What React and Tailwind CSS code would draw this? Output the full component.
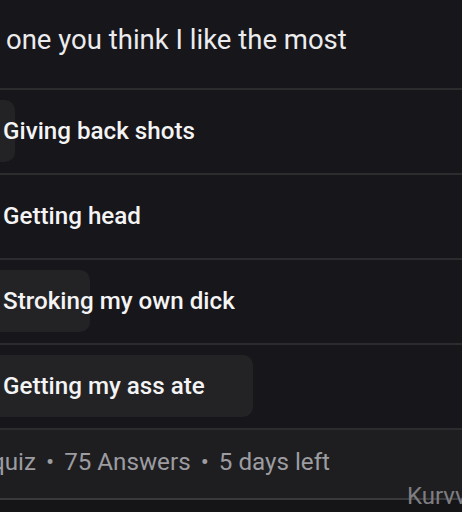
import React from 'react';

const options = [
  { label: 'Giving back shots', bar: 35 },
  { label: 'Getting head', bar: 0 },
  { label: 'Stroking my own dick', bar: 110 },
  { label: 'Getting my ass ate', bar: 273 },
];

export default function App() {
  return (
    <div className="w-[462px] h-[512px] overflow-hidden bg-[#17161a] font-['Roboto',sans-serif] relative">
      <div className="h-[88px] flex items-center pl-[6px] pb-[8px]">
        <span className="text-[27.5px] text-[#ececee]">one you think I like the most</span>
      </div>
      <div className="h-[2px] bg-[#2c2c2f]" />

      {options.map((o) => (
        <div key={o.label}>
          <div className="h-[83px] relative flex items-center pl-[3px]">
            {o.bar > 0 && (
              <div
                className="absolute left-[-20px] top-[10px] h-[62px] rounded-[10px] bg-[#232325]"
                style={{ width: o.bar }}
              />
            )}
            <span className="relative text-[24.2px] font-medium text-[#f4f4f5]">{o.label}</span>
          </div>
          <div className="h-[2px] bg-[#2c2c2f]" />
        </div>
      ))}

      <div className="h-[70px] bg-[#1e1e20] flex items-center pb-[4px] -mt-[2px] border-t-2 border-[#2c2c2f]">
        <span className="ml-[-9px] text-[24.2px] text-[#9c9ca1] whitespace-nowrap">
          quiz<span className="mx-[10px]">•</span>75 Answers<span className="mx-[10px]">•</span>5 days left
        </span>
      </div>
      <div className="h-[2px] bg-[#3a3a3d]" />
      <div className="h-[40px] bg-[#151517]" />

      <span className="absolute left-[407px] top-[478px] text-[24px] text-[#7e7e82] whitespace-nowrap">Kurvvo</span>
    </div>
  );
}
